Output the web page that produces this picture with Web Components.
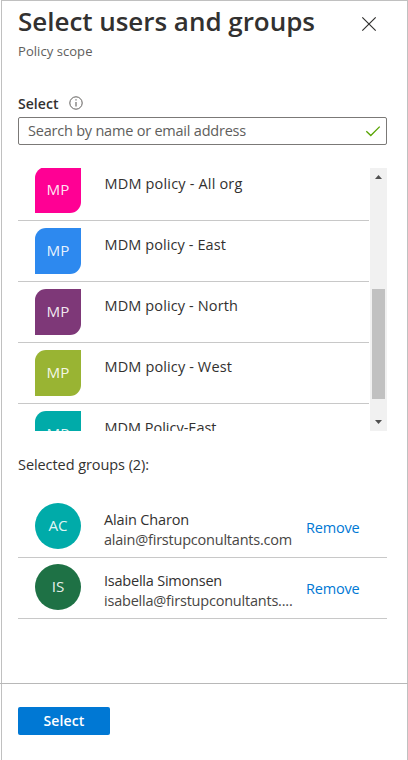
<!DOCTYPE html>
<html lang="en">
<head>
<meta charset="utf-8">
<title>Select users and groups</title>
<style>
html,body{margin:0;height:100%;background:#fff;overflow:hidden}
body{font-family:"Open Sans","Noto Sans",sans-serif;font-size:14.5px;color:#323130}
</style>
</head>
<body>
<scope-panel></scope-panel>
<script>
const define = (name, html, ready) => customElements.define(name, class extends HTMLElement {
  connectedCallback() {
    if (this.shadowRoot) return;
    const t = document.createElement('template');
    t.innerHTML = html;
    this.attachShadow({mode: 'open'}).append(t.content.cloneNode(true));
    if (ready) ready(this, this.shadowRoot);
  }
});

// A single line of text whose tracking is adjusted to a given measure.
define('text-line', `<style>
:host{display:block;white-space:nowrap;line-height:20px}
span{display:inline-block}
</style><span><slot></slot></span>`, (el, root) => {
  const w = +el.getAttribute('measure');
  const s = root.querySelector('span');
  const now = s.getBoundingClientRect().width;
  if (w && now) s.style.letterSpacing = ((w - now) / el.textContent.length).toFixed(3) + 'px';
});

define('initials-tile', `<style>
:host{display:flex;box-sizing:border-box;padding-bottom:2px;flex:none;width:46px;height:46px;align-items:center;justify-content:center;color:#ffffffe6;font-size:15.2px;background:var(--tile);border-radius:11px 0 11px 0}
:host([round]){border-radius:50%}
</style><text-line><slot></slot></text-line>`);

define('group-row', `<style>
:host{display:flex;box-sizing:border-box;height:61px;padding:7px 0 7px 17px;border-bottom:1px solid #c8c8c8}
text-line{margin:7px 0 0 23.5px}
</style><initials-tile>MP</initials-tile><text-line></text-line>`, (el, root) => {
  root.querySelector('initials-tile').style.setProperty('--tile', el.getAttribute('color'));
  const t = document.createElement('text-line');
  t.setAttribute('measure', el.getAttribute('measure'));
  t.textContent = el.getAttribute('name');
  root.querySelector('text-line').replaceWith(t);
});

define('scroll-rail', `<style>
:host{display:flex;flex-direction:column;width:17px;background:#f1f1f1;align-items:center}
svg{display:block;width:17px;height:17px;flex:none}
.track{flex:1;width:13px;padding-top:104px}
.thumb{height:110px;background:#c1c1c1}
</style><svg viewBox="0 0 17 17"><path fill="#505050" d="M5 11 8.5 7 12 11z"/></svg>
<div class="track"><div class="thumb"></div></div>
<svg viewBox="0 0 17 17"><path fill="#505050" d="M5 6h7L8.5 10z"/></svg>`);

define('group-list', `<style>
:host{display:flex;height:263px;overflow:hidden;justify-content:space-between}
.rows{width:351px;margin-top:-8px}
</style><div class="rows"><slot></slot></div><scroll-rail></scroll-rail>`);

define('selected-row', `<style>
:host{display:flex;box-sizing:border-box;height:61px;padding:6px 0 7px 17px;border-bottom:1px solid #c8c8c8}
.who{width:225px;flex:none;padding:7px 0 0 23px;box-sizing:border-box}
.who text-line+text-line{color:#484644}
a{color:#0078d4;text-decoration:none;margin-top:15px}
</style><initials-tile round></initials-tile><div class="who"></div><a></a>`, (el, root) => {
  const tile = root.querySelector('initials-tile');
  tile.style.setProperty('--tile', el.getAttribute('color'));
  tile.textContent = el.getAttribute('initials');
  const line = (text, w) => {
    const t = document.createElement('text-line');
    t.setAttribute('measure', w);
    t.textContent = text;
    return t;
  };
  root.querySelector('.who').append(
    line(el.getAttribute('name'), el.getAttribute('name-measure')),
    line(el.getAttribute('mail'), el.getAttribute('mail-measure')));
  root.querySelector('a').append(line('Remove', 53.5));
});

define('panel-header', `<style>
:host{display:flex;justify-content:space-between;height:93px}
.title{font-size:26px;font-weight:600;line-height:36px;margin-top:2px}
.sub{font-size:13px;color:#605e5c;margin-top:2px;line-height:20px}
svg{display:block;width:16px;height:16px;margin:15px 10px 0 0}
</style><div><text-line class="title" measure="297">Select users and groups</text-line>
<text-line class="sub" measure="74.5">Policy scope</text-line></div>
<svg viewBox="0 0 16 16"><path d="M1.3 1.3 14.7 14.7M14.7 1.3 1.3 14.7" stroke="#323130" stroke-width="1.2" fill="none"/></svg>`);

define('search-field', `<style>
:host{display:block}
.label{display:flex;height:23px;font-size:14px;font-weight:600;gap:10px}
.label svg{width:14px;height:14px;margin-top:2px}
.box{display:flex;box-sizing:border-box;height:28px;border:1px solid #7b7977;border-radius:2px;padding:3px 5px 0 9px;justify-content:space-between;color:#605e5c}
.box svg{width:16px;height:16px;margin-top:2px}
</style><div class="label"><text-line measure="40.5">Select</text-line>
<svg viewBox="0 0 14 14"><circle cx="7" cy="7" r="6.2" fill="none" stroke="#605e5c"/><path d="M7 6v4.5M7 3.3v1.2" stroke="#605e5c" stroke-width="1.1"/></svg></div>
<div class="box"><text-line measure="218">Search by name or email address</text-line>
<svg viewBox="0 0 16 16"><path d="M1.3 8.2 5.8 12.5 14.7 3.6" stroke="#57a300" stroke-width="1.3" fill="none"/></svg></div>`);

define('primary-button', `<style>
:host{display:flex;box-sizing:border-box;width:92px;height:28px;background:#0078d4;border-radius:2px;color:#fff;font-size:14px;font-weight:600;justify-content:center;padding-top:4px}
</style><text-line></text-line>`, (el, root) => {
  const t = document.createElement('text-line');
  t.setAttribute('measure', '41');
  t.textContent = el.getAttribute('label');
  root.querySelector('text-line').replaceWith(t);
});

define('scope-panel', `<style>
:host{display:flex;flex-direction:column;height:760px;width:408px}
main{box-sizing:border-box;height:683px;margin-left:1px;border:1px solid #c0c0c0;border-bottom:0;padding:0 20px 0 16px}
group-list{margin-top:23px}
.caption{margin-top:24px;height:42px}
footer{border-top:1px solid #b8b8b8;height:76px}
.inner{box-sizing:border-box;height:76px;margin-left:1px;border:solid #c0c0c0;border-width:0 1px;padding:23px 16px 0}
</style>
<main>
<panel-header></panel-header>
<search-field></search-field>
<group-list>
<group-row color="#ff0094" name="MDM policy - All org" measure="138"></group-row>
<group-row color="#2d89ef" name="MDM policy - East" measure="121.5"></group-row>
<group-row color="#7e3878" name="MDM policy - North" measure="133.5"></group-row>
<group-row color="#99b433" name="MDM policy - West" measure="127.5"></group-row>
<group-row color="#00aba9" name="MDM Policy-East" measure="112"></group-row>
</group-list>
<text-line class="caption" measure="131">Selected groups (2):</text-line>
<selected-row color="#00aba9" initials="AC" name="Alain Charon" name-measure="85" mail="alain@firstupconultants.com" mail-measure="188"></selected-row>
<selected-row color="#1e7145" initials="IS" name="Isabella Simonsen" name-measure="118" mail="isabella@firstupconultants...." mail-measure="188.5"></selected-row>
</main>
<footer><div class="inner"><primary-button label="Select"></primary-button></div></footer>`);
</script>
</body>
</html>
